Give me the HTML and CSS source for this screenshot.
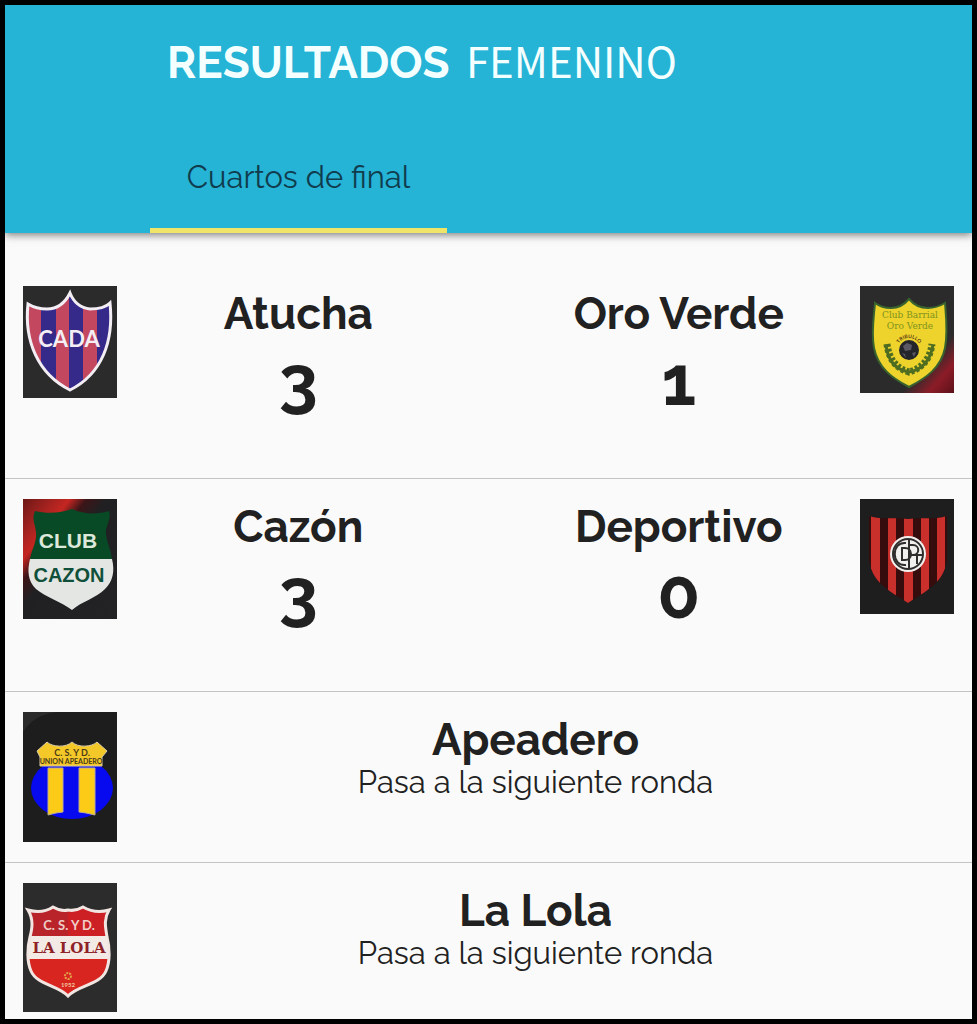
FILE: index.html
```
<!DOCTYPE html>
<html lang="es">
<head>
    <meta charset="UTF-8">
    <meta name="viewport" content="width=device-width, initial-scale=1.0">
    <title>Resultados Femenino</title>
    <link rel="stylesheet" href="styles.css">
</head>
<body>

<header class="header">
    <h1 class="title">RESULTADOS <span class="category">FEMENINO</span></h1>
    <nav class="tabs">
        <a class="tab" href="#cuartos">Cuartos de final</a>
    </nav>
</header>

<main class="results" id="cuartos">
    <section class="match">
        <svg class="crest" viewBox="0 0 94 112" role="img" aria-label="Escudo Atucha">
            <defs>
                <clipPath id="cada"><path d="M47 7C42 17 34 23 24 23C17 23 10 21 5 18C1 55 15 88 47 104C79 88 91 55 87 17C82 22 74 23 67 23C58 22 51 17 47 7Z"/></clipPath>
            </defs>
            <rect width="94" height="112" fill="#2b2b2c"/>
            <g clip-path="url(#cada)">
                <rect width="94" height="112" fill="#c3485f"/>
                <path d="M18 0h15v112H18zM46 0h14v112H46zM74 0h20v112H74z" fill="#35298a"/>
            </g>
            <path d="M47 7C42 17 34 23 24 23C17 23 10 21 5 18C1 55 15 88 47 104C79 88 91 55 87 17C82 22 74 23 67 23C58 22 51 17 47 7Z" fill="none" stroke="#f3eef4" stroke-width="3"/>
            <text x="46" y="61" class="crest-cada">CADA</text>
        </svg>
        <div class="teams">
            <div class="team">
                <h2 class="name">Atucha</h2>
                <p class="score">3</p>
            </div>
            <div class="team">
                <h2 class="name">Oro Verde</h2>
                <p class="score">1</p>
            </div>
        </div>
        <svg class="crest" viewBox="0 0 94 107" role="img" aria-label="Escudo Oro Verde">
            <defs>
                <linearGradient id="redCorner" x1="0" y1="0" x2="1" y2="1">
                    <stop offset="0.72" stop-color="#2b2b2c"/>
                    <stop offset="0.86" stop-color="#8c1c27"/>
                    <stop offset="1" stop-color="#5c1019"/>
                </linearGradient>
                <path id="arc" d="M37 64A12 12 0 0 1 61 64"/>
            </defs>
            <rect width="94" height="107" fill="url(#redCorner)"/>
            <path d="M49 13C44 19 38 22 31 22C25 22 19 20 15 17C14 30 11 46 14 62C18 82 32 92 49 101C66 92 81 82 85 62C88 46 86 30 85 17C80 20 74 22 68 22C60 22 54 19 49 13Z" fill="#edd32b" stroke="#38632f" stroke-width="2"/>
            <text x="50" y="32" class="crest-oro">Club Barrial</text>
            <text x="50" y="43" class="crest-oro">Oro Verde</text>
            <text class="crest-arc"><textPath href="#arc" startOffset="50%">TRIBULLO</textPath></text>
            <circle cx="49" cy="64" r="10" fill="#24252b"/>
            <path d="M43 60l4-3 5 2-1 5-6 1zM52 67l4-1-2 5zM42 67l3 1 1 4z" fill="#5b5a64"/>
            <g fill="none" stroke="#4e6d21">
                <path d="M26 59C28 76 37 84 49 86C61 84 70 76 73 59" stroke-width="3"/>
                <path d="M27 58C29 75 38 83 49 86C60 83 70 75 72 58" stroke-width="7" stroke-dasharray="3 2"/>
            </g>
        </svg>
    </section>

    <section class="match">
        <svg class="crest" viewBox="0 0 94 120" role="img" aria-label="Escudo Cazón">
            <defs>
                <linearGradient id="redEdge" x1="0" y1="0" x2="1" y2="1">
                    <stop offset="0" stop-color="#6d1715"/>
                    <stop offset="0.16" stop-color="#a52320"/>
                    <stop offset="0.25" stop-color="#c52621"/>
                    <stop offset="0.34" stop-color="#3c1518"/>
                    <stop offset="0.45" stop-color="#202022"/>
                    <stop offset="1" stop-color="#232325"/>
                </linearGradient>
            </defs>
            <rect width="94" height="120" fill="url(#redEdge)"/>
            <path d="M12 12C25 15 38 14 49 10C60 15 74 16 86 12C89 20 82 27 83 35C84 44 88 51 89 60H7C9 50 14 42 13 34C13 27 8 20 12 12Z" fill="#084a25"/>
            <path d="M7 60H89C92 72 90 82 82 90C73 99 58 103 49 111C39 103 22 98 13 90C5 82 4 72 7 60Z" fill="#e4e6e4"/>
            <text x="45" y="49" class="crest-club">CLUB</text>
            <text x="46" y="83" class="crest-cazon">CAZON</text>
        </svg>
        <div class="teams">
            <div class="team">
                <h2 class="name">Cazón</h2>
                <p class="score">3</p>
            </div>
            <div class="team">
                <h2 class="name">Deportivo</h2>
                <p class="score">0</p>
            </div>
        </div>
        <svg class="crest" viewBox="0 0 94 115" role="img" aria-label="Escudo Deportivo">
            <defs>
                <clipPath id="deportivo"><path d="M9 17C22 21 36 18 48 20C60 18 74 21 87 17V58C86 82 68 91 48 104C28 91 10 82 9 58Z"/></clipPath>
            </defs>
            <rect width="94" height="115" fill="#1e1e1f"/>
            <g clip-path="url(#deportivo)">
                <rect width="94" height="115" fill="#360c0d"/>
                <path d="M11 0h9v115h-9zM28 0h8v115h-8zM44 0h9v115h-9zM61 0h8v115h-8zM77 0h8v115h-8z" fill="#c9302c"/>
            </g>
            <circle cx="48" cy="55" r="18" fill="#f2f0ee"/>
            <g fill="none" stroke="#302d2d" stroke-width="2">
                <circle cx="48" cy="55" r="15"/>
                <path d="M46 44C31 42 31 68 46 66M42 49V61H45C53 61 53 49 45 49ZM49 40V70M49 46H53C60 46 60 56 53 56H49M54 56H63M57 56V65"/>
            </g>
        </svg>
    </section>

    <section class="match">
        <svg class="crest" viewBox="0 0 94 130" role="img" aria-label="Escudo Apeadero">
            <rect width="94" height="130" fill="#1d1d1e"/>
            <path d="M0 0H34C17 2 7 9 0 20Z" fill="#2b2b2c"/>
            <ellipse cx="49" cy="76" rx="41" ry="31" fill="#0709ee"/>
            <path d="M14 39L24 30C29 35 43 36 49 30C55 36 69 35 74 30L84 39L79 45V54H17V45Z" fill="#f3c828" stroke="#d9cba6"/>
            <path d="M25 56H40V100L33 101L25 103ZM56 56H72V103L63 101L56 100Z" fill="#fbcb17" stroke="#b8ab98"/>
            <text x="49" y="44" class="crest-csyd">C. S. Y D.</text>
            <text x="48" y="52" class="crest-union">UNION APEADERO</text>
        </svg>
        <div class="bye">
            <h2 class="name">Apeadero</h2>
            <p class="note">Pasa a la siguiente ronda</p>
        </div>
    </section>

    <section class="match">
        <svg class="crest" viewBox="0 0 94 129" role="img" aria-label="Escudo La Lola">
            <defs>
                <clipPath id="lola"><path d="M5 27C15 30 24 28 30 24C35 27 41 28 45 27C50 28 55 27 60 24C67 28 76 30 86 27C80 37 83 46 84 54C87 65 87 79 83 88C77 102 55 102 45 113C35 102 14 102 8 88C4 79 4 65 7 54C9 46 11 37 5 27Z"/></clipPath>
            </defs>
            <rect width="94" height="129" fill="#2c2c2d"/>
            <g clip-path="url(#lola)">
                <rect width="94" height="129" fill="#b9242a"/>
                <rect x="45" width="49" height="129" fill="#cc2025"/>
                <rect y="76" width="94" height="53" fill="#d9251f"/>
                <rect y="53" width="94" height="23" fill="#f4eae5"/>
            </g>
            <path d="M5 27C15 30 24 28 30 24C35 27 41 28 45 27C50 28 55 27 60 24C67 28 76 30 86 27C80 37 83 46 84 54C87 65 87 79 83 88C77 102 55 102 45 113C35 102 14 102 8 88C4 79 4 65 7 54C9 46 11 37 5 27Z" fill="none" stroke="#f2e6e3" stroke-width="3"/>
            <text x="46" y="47" class="crest-sigla">C. S. Y D.</text>
            <text x="46" y="70" class="crest-lola">LA LOLA</text>
            <circle cx="45" cy="93" r="3" fill="none" stroke="#e3a04a" stroke-width="2" stroke-dasharray="2 1"/>
            <text x="45" y="104" class="crest-year">1952</text>
        </svg>
        <div class="bye">
            <h2 class="name">La Lola</h2>
            <p class="note">Pasa a la siguiente ronda</p>
        </div>
    </section>
</main>

</body>
</html>
```

FILE: styles.css
```
* {
    box-sizing: border-box;
}
body {
    margin: 0;
    min-height: 100vh;
    border: 5px solid #000000;
    background-color: #fafafa;
    color: #212121;
    font-family: Raleway, Lato, sans-serif;
}
h1, h2, p {
    margin: 0;
}
.header {
    background-color: #25b3d6;
    box-shadow: 0 2px 8px rgba(0, 0, 0, 0.5);
    display: flex;
    flex-direction: column;
    gap: 58px;
    padding-top: 30px;
}
.title {
    padding-left: 162px;
    color: #f4ffff;
    font-size: 44px;
    line-height: 56px;
    font-weight: 700;
}
.category {
    margin-left: 6px;
    font-family: "Noto Sans CJK JP", "Noto Sans", sans-serif;
    font-size: 42px;
    line-height: 42px;
    font-weight: 400;
}
.tabs {
    display: flex;
    padding-left: 145px;
}
.tab {
    width: 297px;
    height: 84px;
    border-bottom: 5px solid #efe569;
    color: #103c4d;
    font-size: 31px;
    line-height: 56px;
    font-weight: 400;
    text-align: center;
    text-decoration: none;
}
.results {
    padding-top: 33px;
}
.match {
    display: flex;
    align-items: flex-start;
    padding: 20px 18px;
    border-bottom: 1px solid #c4c4c4;
}
.match:last-child {
    padding-bottom: 7px;
    border-bottom: none;
}
.crest {
    width: 94px;
    flex-shrink: 0;
}
.crest text {
    text-anchor: middle;
}
.teams {
    flex: 1;
    display: grid;
    grid-template-columns: 1fr 1fr;
    gap: 84px;
    height: 172px;
    padding: 0 33px;
}
.team, .bye {
    text-align: center;
}
.bye {
    flex: 1;
}
.name {
    font-size: 44px;
    line-height: 56px;
    font-weight: 700;
}
.score {
    font-size: 70px;
    line-height: 76px;
    font-weight: 700;
}
.note {
    font-size: 31px;
    line-height: 28px;
    font-weight: 400;
}

/* lettering inside the crests */
.crest-cada {
    font: 700 22px Lato, sans-serif;
    fill: #f3eef4;
}
.crest-oro {
    font: 9px "DejaVu Serif", serif;
    fill: #7f9420;
}
.crest-arc {
    font: 700 5px Lato, sans-serif;
    fill: #5a3518;
}
.crest-club {
    font: 700 21px "Liberation Sans", sans-serif;
    fill: #dce8da;
}
.crest-cazon {
    font: 700 20px "Liberation Sans", sans-serif;
    fill: #10503a;
}
.crest-csyd {
    font: 700 9px Lato, sans-serif;
    fill: #4a3a18;
}
.crest-union {
    font: 700 7px Lato, sans-serif;
    fill: #4a3a18;
}
.crest-sigla {
    font: 700 13px Lato, sans-serif;
    fill: #f0cfc8;
}
.crest-lola {
    font: 700 15px "DejaVu Serif", serif;
    fill: #8d2227;
}
.crest-year {
    font: 700 6px Lato, sans-serif;
    fill: #f0c9a0;
}
```
